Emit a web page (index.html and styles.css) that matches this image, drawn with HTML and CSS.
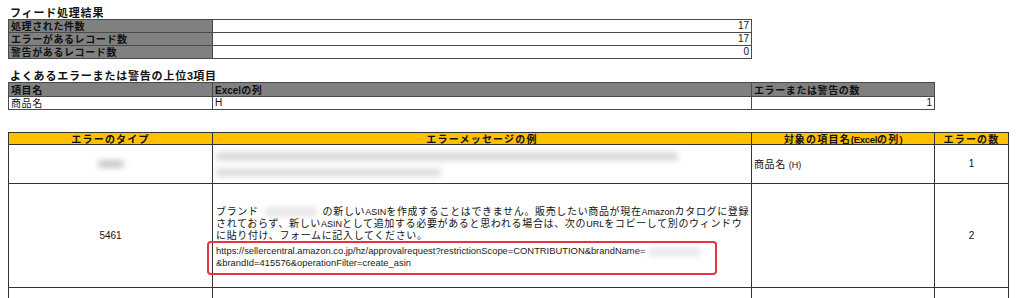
FILE: index.html
```html
<!DOCTYPE html>
<html lang="ja">
<head>
<meta charset="utf-8">
<link rel="stylesheet" href="styles.css">
</head>
<body>
<div class="page">
  <div class="title">フィード処理結果</div>
  <div class="grid g1">
    <div class="c hd">処理された件数</div><div class="c num">17</div>
    <div class="c hd">エラーがあるレコード数</div><div class="c num">17</div>
    <div class="c hd">警告があるレコード数</div><div class="c num">0</div>
  </div>

  <div class="title t2">よくあるエラーまたは警告の上位<span class="lat">3</span>項目</div>
  <div class="grid g2">
    <div class="c hd">項目名</div><div class="c hd"><span class="lat">Excel</span>の列</div><div class="c hd">エラーまたは警告の数</div>
    <div class="c">商品名</div><div class="c lat">H</div><div class="c num">1</div>
  </div>

  <div class="grid g3">
    <div class="c yh">エラーのタイプ</div>
    <div class="c yh">エラーメッセージの例</div>
    <div class="c yh">対象の項目名<span class="lat">(Excel</span>の列<span class="lat">)</span></div>
    <div class="c yh">エラーの数</div>

    <div class="c mid"><span class="blur b-code"></span></div>
    <div class="c msgblur"><span class="blur b-l1"></span><span class="blur b-l2"></span></div>
    <div class="c left"><span>商品名&nbsp;<span class="lat sm">(H)</span></span></div>
    <div class="c mid lat">1</div>

    <div class="c mid lat">5461</div>
    <div class="c msg">
      <div class="jl">ブランド<span class="blur b-brand"></span>の新しい<span class="lat sm">ASIN</span>を作成することはできません。販売したい商品が現在<span class="lat sm">Amazon</span>カタログに登録</div>
      <div class="jl">されておらず、新しい<span class="lat sm">ASIN</span>として追加する必要があると思われる場合は、次の<span class="lat sm">URL</span>をコピーして別のウィンドウ</div>
      <div class="jl">に貼り付け、フォームに記入してください。</div>
      <div class="url">
        <div class="ul">https://sellercentral.amazon.co.jp/hz/approvalrequest?restrictionScope=CONTRIBUTION&amp;brandName=<span class="blur b-brand2"></span></div>
        <div class="ul">&amp;brandId=415576&amp;operationFilter=create_asin</div>
        <span class="redbox"></span>
      </div>
    </div>
    <div class="c"></div>
    <div class="c mid lat">2</div>

    <div class="c"></div><div class="c"></div><div class="c"></div><div class="c"></div>
  </div>
</div>
</body>
</html>
```

FILE: styles.css
```css
html, body {
  margin: 0;
  padding: 0;
  background: #fff;
  overflow: hidden;
}
body {
  font-family: "Noto Sans CJK JP", sans-serif;
  color: #111;
  font-size: 10px;
}
.page {
  padding: 6px 0 0 8px;
  height: 292px;
  overflow: hidden;
}
.title {
  font-size: 11px;
  font-weight: bold;
  line-height: 13px;
  height: 13px;
  letter-spacing: 0.8px;
  padding-left: 2px;
}
.t2 { margin-top: 10px; }
.grid {
  display: grid;
  gap: 1px;
  padding: 1px;
  background: #4a4a4a;
  width: max-content;
}
.g1 {
  grid-template-columns: 203px 538px;
  grid-auto-rows: 12px;
}
.g2 {
  grid-template-columns: 203px 538px 182px;
  grid-template-rows: 13px 12px;
}
.g3 {
  margin-top: 22px;
  background: #333;
  grid-template-columns: 203px 538px 182px 73px;
  grid-template-rows: 11px 38px 103px 20px;
}
.c {
  background: #fff;
  line-height: 12px;
  padding: 0 2px;
  white-space: nowrap;
  letter-spacing: 0.6px;
  position: relative;
}
.hd {
  background: #808080;
  font-weight: bold;
  color: #111;
}
.g2 .hd { line-height: 13px; }
.num {
  text-align: right;
  font-family: "Liberation Sans", sans-serif;
  letter-spacing: 0;
}
.lat {
  font-family: "Liberation Sans", sans-serif;
  letter-spacing: 0;
}
.sm { font-size: 9px; }
.yh {
  background: #ffc000;
  font-weight: bold;
  text-align: center;
  line-height: 11px;
  letter-spacing: 1.2px;
}
.yh .lat { letter-spacing: -0.3px; font-size: 9.5px; }
.mid {
  display: flex;
  align-items: center;
  justify-content: center;
}
.left {
  display: flex;
  align-items: center;
}
.msgblur {
  display: flex;
  flex-direction: column;
  justify-content: center;
  gap: 9px;
  padding-left: 3px;
  overflow: hidden;
}
.blur {
  display: inline-block;
  background: #c8c8c8;
  filter: blur(3px);
  border-radius: 3px;
}
.b-code { width: 26px; height: 6px; background: #b8b8b8; }
.b-l1 { width: 462px; height: 7px; background: #d0d0d0; }
.b-l2 { width: 225px; height: 7px; background: #d6d6d6; }
.b-brand { width: 52px; height: 8px; margin: 0 6px; vertical-align: middle; background: #e2e2e2; }
.b-brand2 { width: 52px; height: 8px; margin-left: 4px; vertical-align: middle; background: #e6e6e6; }
.msg {
  display: flex;
  flex-direction: column;
  justify-content: center;
  padding: 3px 0 0 3px;
  z-index: 1;
}
.jl {
  height: 12px;
  line-height: 12px;
  letter-spacing: 0.65px;
}
.jl .lat { line-height: 1; vertical-align: baseline; }
.url {
  position: relative;
  margin-top: 4px;
  font-family: "Liberation Sans", sans-serif;
  font-size: 9.4px;
  letter-spacing: 0;
  color: #222;
}
.ul {
  height: 12px;
  line-height: 12px;
}
.redbox {
  position: absolute;
  left: -9px;
  top: -4px;
  width: 506px;
  height: 30px;
  border: 2px solid #e8353b;
  border-radius: 4px;
  pointer-events: none;
}
```
